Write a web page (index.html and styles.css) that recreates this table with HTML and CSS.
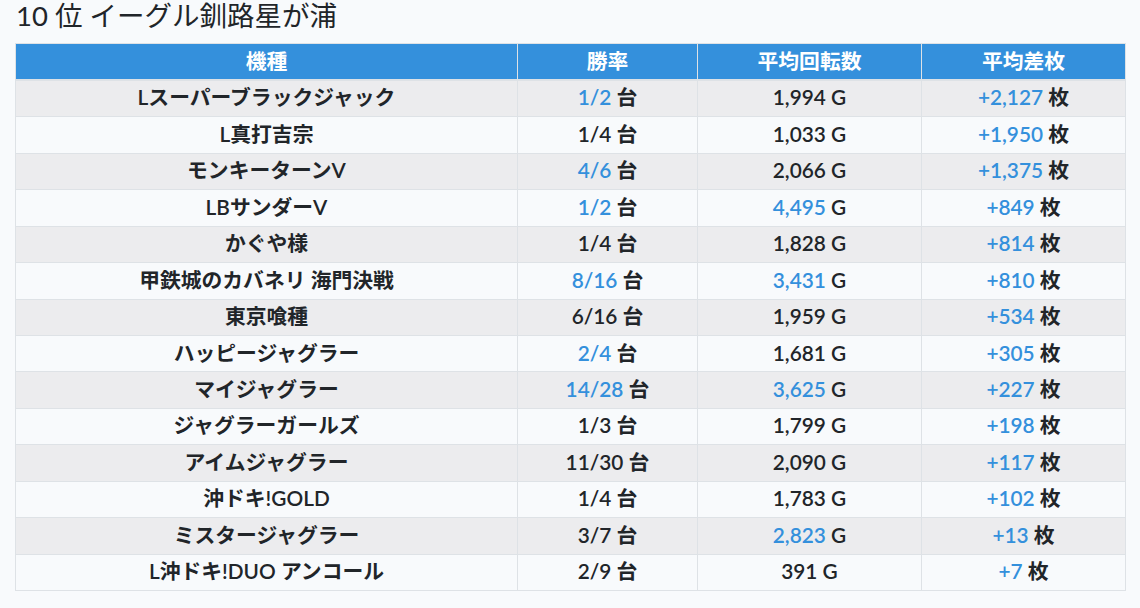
FILE: index.html
```html
<!DOCTYPE html>
<html lang="ja">
<head>
<meta charset="utf-8">
<title>10 位 イーグル釧路星が浦</title>
<link rel="stylesheet" href="styles.css">
</head>
<body>
<div class="container">
  <h3 class="title">10 位 イーグル釧路星が浦</h3>
  <table class="ranking">
    <colgroup>
      <col class="c-name">
      <col class="c-win">
      <col class="c-spin">
      <col class="c-diff">
    </colgroup>
    <thead>
      <tr><th>機種</th><th>勝率</th><th>平均回転数</th><th>平均差枚</th></tr>
    </thead>
    <tbody>
      <tr><td>Lスーパーブラックジャック</td><td><span class="hl">1/2</span> 台</td><td>1,994 G</td><td><span class="hl">+2,127</span> 枚</td></tr>
      <tr><td>L真打吉宗</td><td>1/4 台</td><td>1,033 G</td><td><span class="hl">+1,950</span> 枚</td></tr>
      <tr><td>モンキーターンV</td><td><span class="hl">4/6</span> 台</td><td>2,066 G</td><td><span class="hl">+1,375</span> 枚</td></tr>
      <tr><td>LBサンダーV</td><td><span class="hl">1/2</span> 台</td><td><span class="hl">4,495</span> G</td><td><span class="hl">+849</span> 枚</td></tr>
      <tr><td>かぐや様</td><td>1/4 台</td><td>1,828 G</td><td><span class="hl">+814</span> 枚</td></tr>
      <tr><td>甲鉄城のカバネリ 海門決戦</td><td><span class="hl">8/16</span> 台</td><td><span class="hl">3,431</span> G</td><td><span class="hl">+810</span> 枚</td></tr>
      <tr><td>東京喰種</td><td>6/16 台</td><td>1,959 G</td><td><span class="hl">+534</span> 枚</td></tr>
      <tr><td>ハッピージャグラー</td><td><span class="hl">2/4</span> 台</td><td>1,681 G</td><td><span class="hl">+305</span> 枚</td></tr>
      <tr><td>マイジャグラー</td><td><span class="hl">14/28</span> 台</td><td><span class="hl">3,625</span> G</td><td><span class="hl">+227</span> 枚</td></tr>
      <tr><td>ジャグラーガールズ</td><td>1/3 台</td><td>1,799 G</td><td><span class="hl">+198</span> 枚</td></tr>
      <tr><td>アイムジャグラー</td><td>11/30 台</td><td>2,090 G</td><td><span class="hl">+117</span> 枚</td></tr>
      <tr><td>沖ドキ!GOLD</td><td>1/4 台</td><td>1,783 G</td><td><span class="hl">+102</span> 枚</td></tr>
      <tr><td>ミスタージャグラー</td><td>3/7 台</td><td><span class="hl">2,823</span> G</td><td><span class="hl">+13</span> 枚</td></tr>
      <tr><td>L沖ドキ!DUO アンコール</td><td>2/9 台</td><td>391 G</td><td><span class="hl">+7</span> 枚</td></tr>
    </tbody>
  </table>
</div>
</body>
</html>
```

FILE: styles.css
```css
html, body {
  margin: 0;
  padding: 0;
  background: #f8fafc;
  color: #212529;
  font-family: "Lato", "Noto Sans CJK JP", sans-serif;
}

.container {
  width: 1110px;
  padding: 0 15px;
}

.title {
  margin: 0 0 10.6px 0;
  font-size: 27.5px;
  line-height: 32.4px;
  font-weight: 400;
  padding-left: 1px;
}

.ranking {
  width: 1110px;
  border-collapse: collapse;
  table-layout: fixed;
  font-size: 20.8px;
  font-weight: 600;
}

.c-name { width: 502px; }
.c-win { width: 180px; }
.c-spin { width: 224px; }
.c-diff { width: 204px; }

.ranking th,
.ranking td {
  border: 1px solid #dee2e6;
  text-align: center;
  white-space: nowrap;
}

.ranking th {
  background: #3490dc;
  color: #ffffff;
  padding: 3.6px 6px 5.6px;
  line-height: 25.8px;
  border-bottom: 2px solid #dee2e6;
  font-weight: 600;
}

.ranking td {
  padding: 3.5px 6px 6.5px;
  line-height: 25.43px;
}

.ranking tbody tr:nth-child(odd) td {
  background: #ececee;
}

.ranking tbody tr:nth-child(even) td {
  background: #f8fafc;
}

.hl {
  color: #3490dc;
}
```
